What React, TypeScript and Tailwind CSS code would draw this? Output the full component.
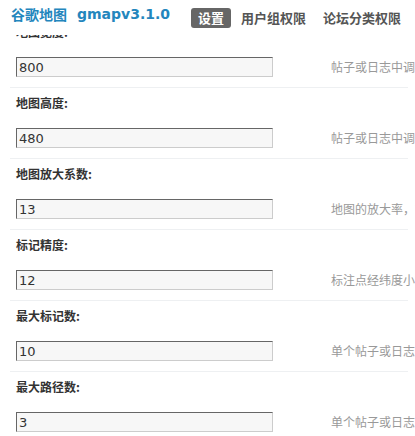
import { useState } from 'react';

interface SettingRow {
  label: string;
  value: string;
  tip: string;
}

const rows: SettingRow[] = [
  { label: '地图宽度:', value: '800', tip: '帖子或日志中调用地图的宽度，单位：像素' },
  { label: '地图高度:', value: '480', tip: '帖子或日志中调用地图的高度，单位：像素' },
  { label: '地图放大系数:', value: '13', tip: '地图的放大率，数值越大地图越详细' },
  { label: '标记精度:', value: '12', tip: '标注点经纬度小数点后保留的位数' },
  { label: '最大标记数:', value: '10', tip: '单个帖子或日志中允许的最大标记数' },
  { label: '最大路径数:', value: '3', tip: '单个帖子或日志中允许的最大路径数' },
];

const tabs = ['设置', '用户组权限', '论坛分类权限'];

export default function App() {
  const [active, setActive] = useState(0);
  const [values, setValues] = useState<string[]>(rows.map(r => r.value));

  return (
    <div className="h-[436px] w-[415px] overflow-hidden bg-white flex flex-col font-['Noto_Sans_CJK_SC',sans-serif]">
      {/* header sits over the scrolled settings table */}
      <div className="relative z-10 h-[35px] shrink-0 bg-white flex items-start pt-[4px] pl-[11px]">
        <h3 className="h-[20px] flex items-center text-[14px] font-bold text-[#2386bd] whitespace-nowrap">
          <span>谷歌地图</span>
          <span className="ml-[10px] font-['DejaVu_Sans',sans-serif]">gmapv3.1.0</span>
        </h3>
        <ul className="ml-[21px] flex gap-[3px]">
          {tabs.map((tab, i) => (
            <li key={tab}>
              <button
                type="button"
                onClick={() => setActive(i)}
                className={
                  i === active
                    ? 'h-[20px] px-[7px] rounded-[3px] bg-[#666] text-white text-[13px] font-bold leading-[20px] whitespace-nowrap'
                    : 'h-[20px] px-[7px] rounded-[3px] text-[#555] text-[13px] font-bold leading-[20px] whitespace-nowrap'
                }
              >
                {tab}
              </button>
            </li>
          ))}
        </ul>
      </div>

      <div className="flex-1 overflow-hidden">
        <div className="-mt-[19px] ml-[10px] w-[398px]">
          {rows.map((row, i) => (
            <div key={row.label} className="border-t border-[#eef0f2] pl-[6px] pt-[6px] pb-[10px]">
              <div className="h-[18px] leading-[18px] text-[12px] font-bold text-[#333]">
                {row.label}
              </div>
              <div className="mt-[16px] flex items-center whitespace-nowrap">
                <input
                  type="text"
                  value={values[i]}
                  onChange={e => setValues(prev => prev.map((v, j) => (j === i ? e.target.value : v)))}
                  className="box-border w-[257px] h-[20px] shrink-0 pl-[2px] border border-t-[#666] border-l-[#666] border-r-[#ccc] border-b-[#ccc] bg-[#f7f7f7] text-[13px] text-[#333] font-['DejaVu_Sans',sans-serif] outline-none"
                />
                <span className="ml-[58px] text-[12px] text-[#999]">{row.tip}</span>
              </div>
            </div>
          ))}
        </div>
      </div>
    </div>
  );
}
